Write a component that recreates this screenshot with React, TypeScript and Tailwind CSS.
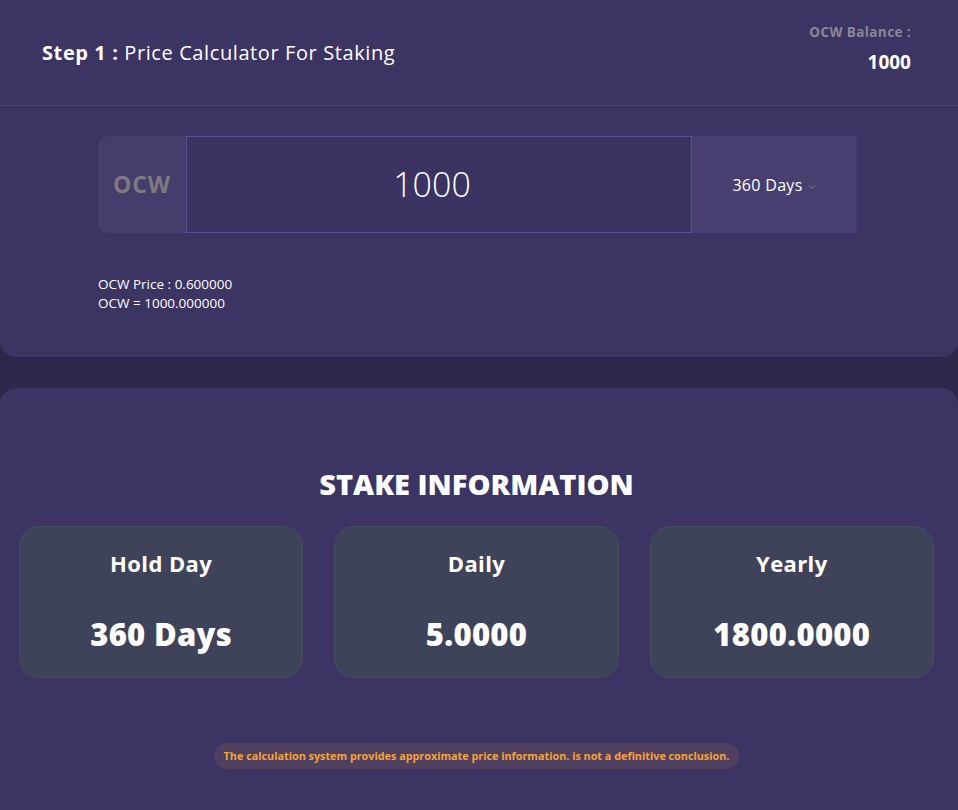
const font = { fontFamily: '"Open Sans", "Noto Sans", sans-serif' };

const stats = [
  { label: "Hold Day", value: "360 Days" },
  { label: "Daily", value: "5.0000" },
  { label: "Yearly", value: "1800.0000" },
];

const App = () => {
  return (
    <div className="min-h-[810px] w-full bg-[#2d2749] text-white" style={font}>
      {/* step 1 panel */}
      <div className="rounded-b-2xl bg-[#3c3462] pb-[44px]">
        <div className="flex items-start justify-between border-b border-[#4a4273] pl-[42px] pr-[47px] pt-[24px] h-[106px]">
          <h2 className="mt-[17px] text-[20px] leading-6 tracking-[0.6px]">
            <span className="font-bold">Step 1 :</span> Price Calculator For Staking
          </h2>
          <div className="flex flex-col items-end">
            <span className="text-[13.5px] font-bold text-[#8c8799] leading-4 tracking-[0.4px]">OCW Balance :</span>
            <span className="mt-[12px] text-[19px] font-bold leading-5">1000</span>
          </div>
        </div>

        <div className="mx-[98px] mt-[30px] w-[759px]">
          <div className="flex h-[97px]">
            <div className="flex w-[88px] items-center justify-center rounded-l-[10px] bg-[#463d6c] text-[23px] font-bold tracking-[1px] text-[#7d7b80]">
              OCW
            </div>
            <div className="flex flex-1 items-center justify-center border border-[#5b5290] bg-[#3b3361] pr-[14px] text-[34px] font-light">
              1000
            </div>
            <div className="flex w-[165px] items-center justify-center gap-1 bg-[#483f70] text-[16px] tracking-[0.3px]">
              360 Days
              <svg width="10" height="10" viewBox="0 0 10 10" className="mt-1 text-[#8a8690]">
                <path d="M2 3.5 L5 6.5 L8 3.5" fill="none" stroke="currentColor" strokeWidth="1" />
              </svg>
            </div>
          </div>
          <div className="mt-[42px] text-[13.5px] leading-[19px]">
            <p>OCW Price : 0.600000</p>
            <p>OCW = 1000.000000</p>
          </div>
        </div>
      </div>

      {/* stake info panel */}
      <div className="mt-[31px] rounded-t-2xl bg-[#3c3462] pl-[19px] pr-[24px] pt-[76px] pb-[41px]">
        <h1 className="text-center text-[29px] font-extrabold leading-10">STAKE INFORMATION</h1>
        <div className="mt-[22px] grid grid-cols-3 gap-[31px]">
          {stats.map((s) => (
            <div
              key={s.label}
              className="flex h-[152px] flex-col items-center rounded-[20px] border border-[#464c5c] bg-[#3f4359] pt-[22px]"
            >
              <span className="text-[22px] font-bold leading-7 tracking-[0.4px]">{s.label}</span>
              <span className="mt-[39px] text-[31px] font-extrabold leading-9 tracking-[0.3px]">{s.value}</span>
            </div>
          ))}
        </div>
        <div className="mt-[65px] flex justify-center">
          <span className="rounded-full bg-[#4f405f] px-[10px] py-[5px] text-[10.8px] font-bold leading-4 text-[#f7a23b]">
            The calculation system provides approximate price information. is not a definitive conclusion.
          </span>
        </div>
      </div>
    </div>
  );
};

export default App;
